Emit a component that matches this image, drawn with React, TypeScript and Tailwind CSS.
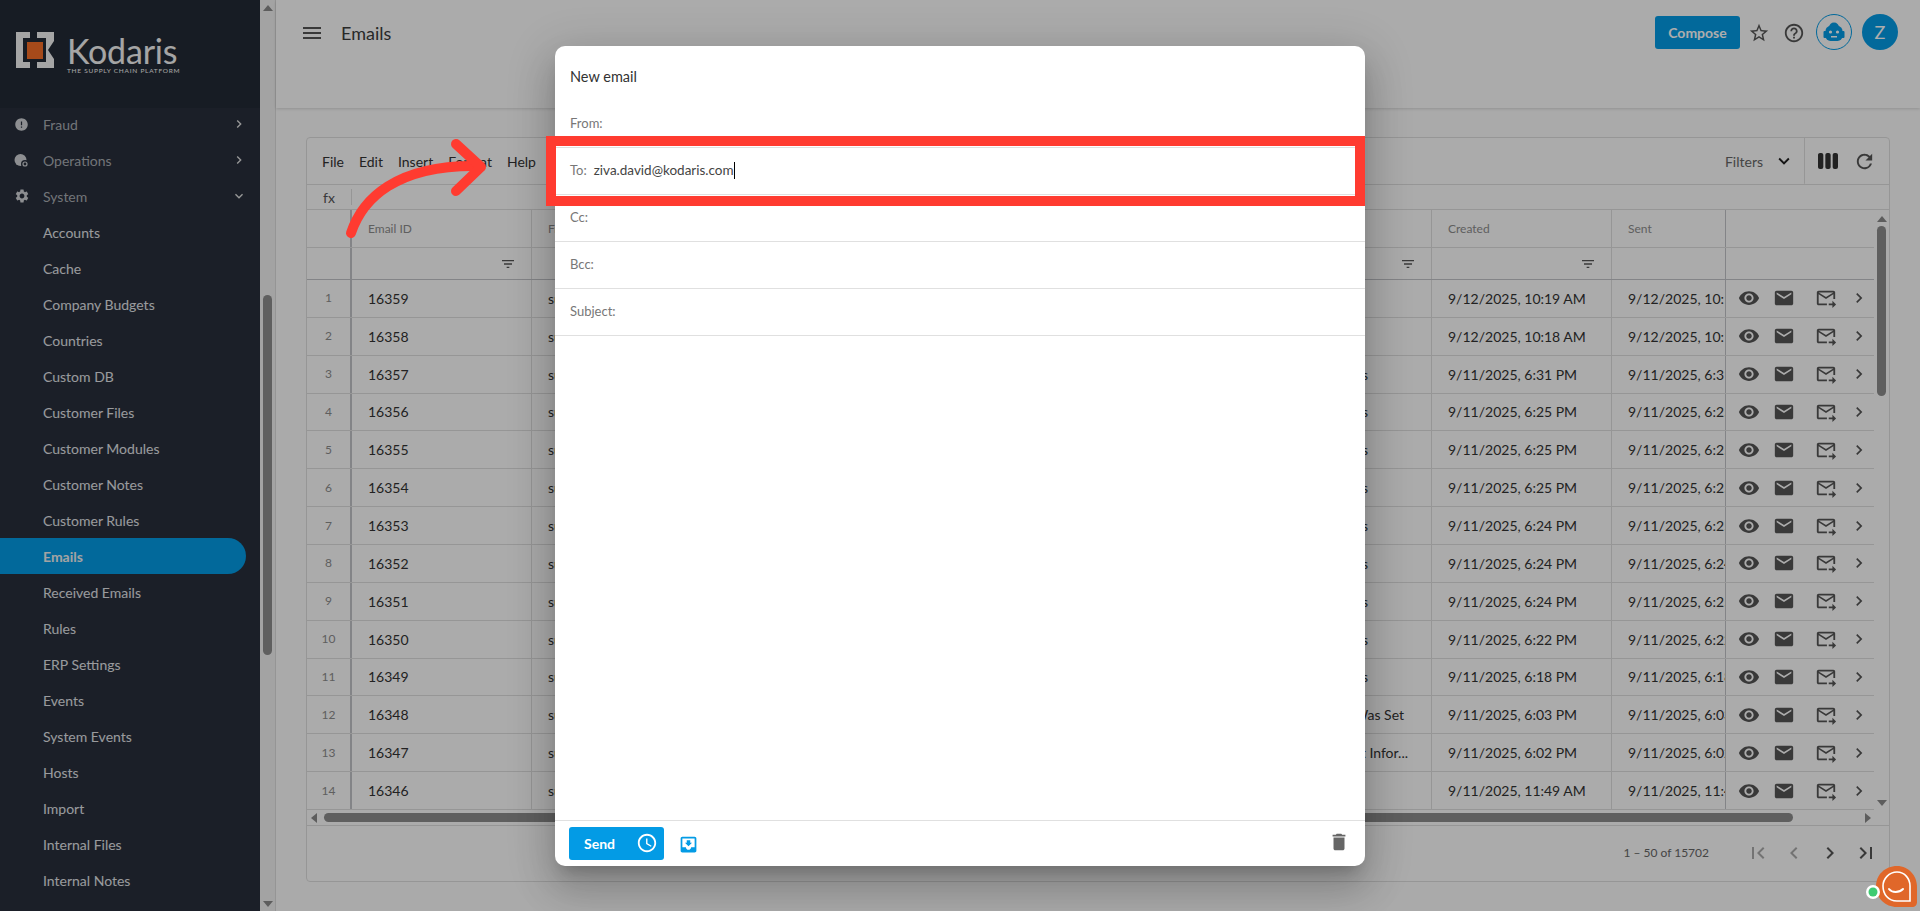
import React from 'react';
import {
  MdError,
  MdSettings,
  MdChevronRight,
  MdExpandMore,
  MdMenu,
  MdStarBorder,
  MdHelpOutline,
  MdViewWeek,
  MdRefresh,
  MdFilterList,
  MdVisibility,
  MdEmail,
  MdForwardToInbox,
  MdFirstPage,
  MdChevronLeft,
  MdLastPage,
  MdAccessTime,
  MdMoveToInbox,
  MdDelete,
} from 'react-icons/md';

const navChildren = [
  'Accounts',
  'Cache',
  'Company Budgets',
  'Countries',
  'Custom DB',
  'Customer Files',
  'Customer Modules',
  'Customer Notes',
  'Customer Rules',
  'Emails',
  'Received Emails',
  'Rules',
  'ERP Settings',
  'Events',
  'System Events',
  'Hosts',
  'Import',
  'Internal Files',
  'Internal Notes',
  'Jobs',
];

const rows = [
  { n: 1, id: 16359, created: '9/12/2025, 10:19 AM', sent: '9/12/2025, 10:19 AM', subject: '', cls: '' },
  { n: 2, id: 16358, created: '9/12/2025, 10:18 AM', sent: '9/12/2025, 10:18 AM', subject: '', cls: '' },
  { n: 3, id: 16357, created: '9/11/2025, 6:31 PM', sent: '9/11/2025, 6:31 PM', subject: 'Order Details', cls: 'pr-[63px]' },
  { n: 4, id: 16356, created: '9/11/2025, 6:25 PM', sent: '9/11/2025, 6:25 PM', subject: 'Order Details', cls: 'pr-[63px]' },
  { n: 5, id: 16355, created: '9/11/2025, 6:25 PM', sent: '9/11/2025, 6:25 PM', subject: 'Order Details', cls: 'pr-[63px]' },
  { n: 6, id: 16354, created: '9/11/2025, 6:25 PM', sent: '9/11/2025, 6:25 PM', subject: 'Order Details', cls: 'pr-[63px]' },
  { n: 7, id: 16353, created: '9/11/2025, 6:24 PM', sent: '9/11/2025, 6:25 PM', subject: 'Order Details', cls: 'pr-[63px]' },
  { n: 8, id: 16352, created: '9/11/2025, 6:24 PM', sent: '9/11/2025, 6:24 PM', subject: 'Order Details', cls: 'pr-[63px]' },
  { n: 9, id: 16351, created: '9/11/2025, 6:24 PM', sent: '9/11/2025, 6:25 PM', subject: 'Order Details', cls: 'pr-[63px]' },
  { n: 10, id: 16350, created: '9/11/2025, 6:22 PM', sent: '9/11/2025, 6:22 PM', subject: 'Order Details', cls: 'pr-[63px]' },
  { n: 11, id: 16349, created: '9/11/2025, 6:18 PM', sent: '9/11/2025, 6:18 PM', subject: 'Order Details', cls: 'pr-[63px]' },
  { n: 12, id: 16348, created: '9/11/2025, 6:03 PM', sent: '9/11/2025, 6:03 PM', subject: 'Your Password Was Set', cls: 'pr-[27px]' },
  { n: 13, id: 16347, created: '9/11/2025, 6:02 PM', sent: '9/11/2025, 6:02 PM', subject: 'Shipment Infor...', cls: 'pr-[23px]' },
  { n: 14, id: 16346, created: '9/11/2025, 11:49 AM', sent: '9/11/2025, 11:49 AM', subject: '', cls: '' },
];

const Logo: React.FC = () => (
  <div className="flex items-start pl-4 pt-8">
    <svg width="38" height="36" viewBox="0 0 38 36" className="shrink-0">
      <path d="M0 0H14V6H7V30H14V36H0Z" fill="#f4f4f4" />
      <path d="M21 0H38V9L32 18L38 27V36H21V30H30V6H21Z" fill="#f4f4f4" />
      <rect x="11" y="10" width="16" height="17" fill="#f56d27" />
    </svg>
    <div className="ml-[13px] -mt-[1px] flex flex-col text-[#f4f4f4]">
      <span className="text-[34px] leading-[40px] h-[36px] tracking-[-0.2px]">Kodaris</span>
      <span className="text-[6.5px] leading-[8px] tracking-[0.75px] whitespace-nowrap">THE SUPPLY CHAIN PLATFORM</span>
    </div>
  </div>
);

const OperationsIcon: React.FC = () => (
  <svg width="15" height="15" viewBox="0 0 15 15">
    <circle cx="6.5" cy="7" r="6" fill="currentColor" />
    <circle cx="11" cy="11" r="4" fill="#282f3c" />
    <circle cx="11" cy="11" r="2" fill="none" stroke="currentColor" strokeWidth="1.2" />
  </svg>
);

const Sidebar: React.FC = () => (
  <aside className="w-[260px] shrink-0 h-full overflow-hidden bg-[#282f3c] flex flex-col">
    <div className="h-[108px] shrink-0 bg-[#232a35]">
      <Logo />
    </div>
    <nav className="-mt-[2px] text-[14px] relative">
      {[
        { label: 'Fraud', icon: <MdError size={15} />, chev: <MdChevronRight size={16} /> },
        { label: 'Operations', icon: <OperationsIcon />, chev: <MdChevronRight size={16} /> },
        { label: 'System', icon: <MdSettings size={16} />, chev: <MdExpandMore size={16} /> },
      ].map(p => (
        <div key={p.label} className="h-9 flex items-center text-[#a8acb2]">
          <span className="w-[43px] flex justify-center pl-[1px] pr-[1px] text-[#d0d2d6]">{p.icon}</span>
          <span className="flex-1">{p.label}</span>
          <span className="mr-[13px] text-[#e0e0e0]">{p.chev}</span>
        </div>
      ))}
      {navChildren.map(c => (
        <div
          key={c}
          className={
            c === 'Emails'
              ? 'h-9 w-[246px] flex items-center pl-[43px] bg-[#039be5] rounded-r-[18px] text-[#f0f0f0] font-bold'
              : 'h-9 flex items-center pl-[43px] text-[#e2e4e8]'
          }
        >
          {c}
        </div>
      ))}
    </nav>
  </aside>
);

const PageScrollbar: React.FC = () => (
  <div className="w-[16px] shrink-0 h-full bg-[#f1f1f1] border-r border-[#dcdcdc] flex flex-col items-center text-[#7a7a7a]">
    <div className="mt-[5px] w-0 h-0 border-x-[5px] border-x-transparent border-b-[6px] border-b-[#8a8a8a]" />
    <div className="mt-[284px] w-[9px] h-[360px] rounded-[5px] bg-[#8c8c8c]" />
    <div className="flex-1" />
    <div className="mb-[4px] w-0 h-0 border-x-[5px] border-x-transparent border-t-[6px] border-t-[#8a8a8a]" />
  </div>
);

const TopBar: React.FC = () => (
  <header className="h-[108px] shrink-0 bg-[#fcfcfc] shadow-[0_1px_3px_rgba(0,0,0,0.15)] flex items-start pl-[24px] pr-[22px] pt-4">
    <MdMenu size={24} className="text-[#555] mt-[5px]" />
    <h1 className="ml-[17px] mt-[4px] text-[18px] leading-[26px] text-[#3c3c3c]">Emails</h1>
    <div className="flex-1" />
    <button className="h-[33px] w-[85px] rounded-[3px] bg-[#039be5] text-white text-[14px] font-bold">Compose</button>
    <MdStarBorder size={22} className="ml-[8px] mt-[6px] text-[#555]" />
    <MdHelpOutline size={22} className="ml-[13px] mt-[6px] text-[#555]" />
    <span className="ml-[11px] -mt-[2px] w-9 h-9 rounded-full border border-[#039be5] flex items-center justify-center">
      <svg width="22" height="20" viewBox="0 0 22 20">
        <circle cx="11" cy="5.5" r="5" fill="#039be5" />
        <rect x="2.5" y="4" width="17" height="15" rx="5" fill="#039be5" />
        <rect x="0.5" y="9" width="3" height="7" rx="1" fill="#039be5" />
        <rect x="18.5" y="9" width="3" height="7" rx="1" fill="#039be5" />
        <circle cx="7.5" cy="10" r="1.6" fill="#fff" />
        <circle cx="14.5" cy="10" r="1.6" fill="#fff" />
        <rect x="8" y="14" width="6" height="1.5" fill="#fff" />
      </svg>
    </span>
    <span className="ml-[10px] -mt-[2px] w-9 h-9 rounded-full bg-[#039be5] text-white text-[18px] flex items-center justify-center">Z</span>
  </header>
);

const Toolbar: React.FC = () => (
  <div className="h-[47px] shrink-0 flex items-center border-b border-[#dedede] text-[14px] text-[#333]">
    <div className="pl-[15px] flex gap-[15px]">
      <span>File</span>
      <span>Edit</span>
      <span>Insert</span>
      <span>Format</span>
      <span>Help</span>
    </div>
    <div className="flex-1" />
    <div className="h-full w-[1px]" />
    <span className="text-[#666]">Filters</span>
    <MdExpandMore size={22} className="ml-[10px] mr-[9px] text-[#222]" />
    <div className="h-full border-l border-[#dedede] rounded-bl-[3px]" />
    <MdViewWeek size={24} className="ml-[11px] text-[#333]" />
    <MdRefresh size={23} className="ml-[13px] mr-[13px] text-[#555]" />
  </div>
);

const headerCell = 'h-full flex items-center overflow-hidden whitespace-nowrap border-r border-[#dedede]';

const TableHead: React.FC = () => (
  <>
    <div className="h-[46px] flex border-b border-[#dedede] text-[12px] text-[#8c8c8c]">
      <div className="w-[45px] h-full border-r-2 border-[#c2c3c8]" />
      <div className={`${headerCell} w-[180px] pl-4`}>Email ID</div>
      <div className={`${headerCell} w-[320px] pl-4`}>From</div>
      <div className={`${headerCell} w-[580px] pl-4`}>Subject</div>
      <div className={`${headerCell} w-[180px] pl-4`}>Created</div>
      <div className="w-[113px] h-full flex items-center pl-4">Sent</div>
      <div className="flex-1 h-full border-l border-[#c2c3c8]" />
    </div>
    <div className="h-[38px] flex border-b border-[#c2c3c8] text-[#555]">
      <div className="w-[45px] h-full border-r-2 border-[#c2c3c8]" />
      <div className={`${headerCell} w-[180px] justify-end pr-[15px]`}>
        <MdFilterList size={16} />
      </div>
      <div className={`${headerCell} w-[320px]`} />
      <div className={`${headerCell} w-[580px] justify-end pr-[15px]`}>
        <MdFilterList size={16} />
      </div>
      <div className={`${headerCell} w-[180px] justify-end pr-[15px]`}>
        <MdFilterList size={16} />
      </div>
      <div className="w-[113px] h-full" />
      <div className="flex-1 h-full border-l border-[#c2c3c8]" />
    </div>
  </>
);

const TableRows: React.FC = () => (
  <>
    {rows.map(r => (
      <div key={r.n} className="h-[37.87px] shrink-0 flex items-center border-b border-[#dedede] text-[14px] text-[#333]">
        <div className="w-[45px] h-full flex items-center justify-center border-r-2 border-[#c2c3c8] text-[12px] text-[#8c8c8c]">{r.n}</div>
        <div className={`${headerCell} w-[180px] pl-4`}>{r.id}</div>
        <div className={`${headerCell} w-[320px] pl-4`}>support@kodaris.com</div>
        <div className={`${headerCell} w-[580px] justify-end ${r.cls}`}>{r.subject}</div>
        <div className={`${headerCell} w-[180px] pl-4`}>{r.created}</div>
        <div className="w-[113px] h-full flex items-center overflow-hidden whitespace-nowrap pl-4">{r.sent}</div>
        <div className="flex-1 h-full flex items-center border-l border-[#c2c3c8] text-[#555]">
          <MdVisibility size={22} className="ml-[12px]" />
          <MdEmail size={22} className="ml-[13px]" />
          <MdForwardToInbox size={22} className="ml-[20px]" />
          <MdChevronRight size={20} className="ml-[12px]" />
        </div>
      </div>
    ))}
  </>
);

const TableCard: React.FC = () => (
  <section className="h-[745px] rounded-[4px] border border-[#dedede] bg-[#fcfcfc] flex flex-col overflow-hidden">
    <Toolbar />
    <div className="h-[25px] shrink-0 flex items-center border-b border-[#dedede]">
      <span className="w-[45px] h-[16px] flex items-center justify-center border-r border-[#dedede] text-[14px] text-[#555] italic-none">fx</span>
    </div>
    <div className="h-[600px] shrink-0 flex overflow-hidden">
      <div className="flex-1 min-w-0 flex flex-col overflow-hidden">
        <TableHead />
        <TableRows />
      </div>
      <div className="w-[15px] shrink-0 flex flex-col items-center">
        <div className="mt-[6px] w-0 h-0 border-x-[5px] border-x-transparent border-b-[6px] border-b-[#8a8a8a]" />
        <div className="mt-[4px] w-[9px] h-[170px] rounded-[5px] bg-[#8c8c8c]" />
        <div className="flex-1" />
        <div className="mb-[4px] w-0 h-0 border-x-[5px] border-x-transparent border-t-[6px] border-t-[#8a8a8a]" />
      </div>
    </div>
    <div className="h-[16px] shrink-0 flex items-center border-b border-[#dedede] pl-[4px] pr-[18px]">
      <div className="w-0 h-0 border-y-[5px] border-y-transparent border-r-[6px] border-r-[#8a8a8a]" />
      <div className="ml-[7px] w-[1469px] h-[9px] rounded-[5px] bg-[#8c8c8c]" />
      <div className="flex-1" />
      <div className="w-0 h-0 border-y-[5px] border-y-transparent border-l-[6px] border-l-[#8a8a8a]" />
    </div>
    <div className="flex-1 flex items-center justify-end pr-[11px] pb-[1px] text-[#555]">
      <span className="text-[12px] text-[#666] mr-[37px]">1 – 50 of 15702</span>
      <MdFirstPage size={24} className="text-[#aaa]" />
      <MdChevronLeft size={24} className="ml-[12px] text-[#aaa]" />
      <MdChevronRight size={24} className="ml-[12px]" />
      <MdLastPage size={24} className="ml-[12px]" />
    </div>
  </section>
);

const ComposeRow: React.FC<{ label: string; value?: string }> = ({ label, value }) => (
  <div className="h-[47px] shrink-0 flex items-center border-b border-[#e0e0e0] px-[15px] text-[13px] text-[#777]">
    <span>{label}</span>
    {value && (
      <span className="ml-[7px] text-[#444] text-[13.5px] border-r border-black leading-[17px]">{value}</span>
    )}
  </div>
);

const ComposeDialog: React.FC = () => (
  <div className="absolute inset-0 flex items-center justify-center bg-black/[0.32]">
    <div className="w-[810px] h-[820px] rounded-[10px] bg-white flex flex-col overflow-hidden shadow-[0_11px_15px_-7px_rgba(0,0,0,0.2),0_24px_38px_3px_rgba(0,0,0,0.14),0_9px_46px_8px_rgba(0,0,0,0.12)]">
      <h2 className="h-[55px] shrink-0 flex items-end pb-[14px] px-[15px] text-[14.5px] leading-[20px] text-[#333]">New email</h2>
      <ComposeRow label="From:" />
      <ComposeRow label="To:" value="ziva.david@kodaris.com" />
      <ComposeRow label="Cc:" />
      <ComposeRow label="Bcc:" />
      <ComposeRow label="Subject:" />
      <div className="flex-1" />
      <footer className="h-[46px] shrink-0 border-t border-[#e0e0e0] flex items-start pt-[6px] pl-[14px] pr-[15px]">
        <button className="h-[33px] w-[95px] rounded-[3px] bg-[#039be5] text-white flex items-center pl-[15px] text-[14px] font-bold">
          <span>Send</span>
          <MdAccessTime size={22} className="ml-[21px]" />
        </button>
        <MdMoveToInbox size={21} className="ml-[14px] mt-[7px] text-[#039be5]" />
        <div className="flex-1" />
        <MdDelete size={22} className="mt-[4px] text-[#666]" />
      </footer>
    </div>
  </div>
);

const Annotation: React.FC = () => (
  <>
    <div className="absolute left-[546px] top-[136px] w-[819px] h-[70px] border-[10px] border-[#ff3b30]" />
    <svg className="absolute left-0 top-0 pointer-events-none" width="520" height="260" viewBox="0 0 520 260" fill="none">
      <path d="M351 233C362 200 395 164 480 166" stroke="#ff3b30" strokeWidth="10" strokeLinecap="round" />
      <path d="M456 144L481 167L456 191" stroke="#ff3b30" strokeWidth="10" strokeLinecap="round" strokeLinejoin="round" />
    </svg>
  </>
);

const ChatWidget: React.FC = () => (
  <svg className="absolute left-[1866px] top-[866px]" width="52" height="42" viewBox="0 0 52 42" fill="none">
    <path d="M31 0C43 0 51 10 51 21V36C51 39 49 41 46 41H31C19 41 10 32 10 20C10 9 19 0 31 0Z" fill="#e0672a" />
    <path d="M31 6C39 6 44 13 44 20V35H31C22 35 17 28 17 20C17 13 23 6 31 6Z" stroke="#fff" strokeWidth="1.6" />
    <path d="M23 23C26 27 33 27 37 23" stroke="#fff" strokeWidth="2" strokeLinecap="round" />
    <circle cx="7" cy="26" r="7" fill="#fff" />
    <circle cx="7" cy="26" r="4.5" fill="#3ecb72" />
  </svg>
);

const App: React.FC = () => (
  <div className="relative w-full h-[911px] overflow-hidden flex bg-[#fbfbfb] font-['Lato',sans-serif]">
    <Sidebar />
    <PageScrollbar />
    <main className="flex-1 min-w-0 flex flex-col">
      <TopBar />
      <div className="pt-[29px] pl-[30px] pr-[30px]">
        <TableCard />
      </div>
    </main>
    <ComposeDialog />
    <Annotation />
    <ChatWidget />
  </div>
);

export default App;
